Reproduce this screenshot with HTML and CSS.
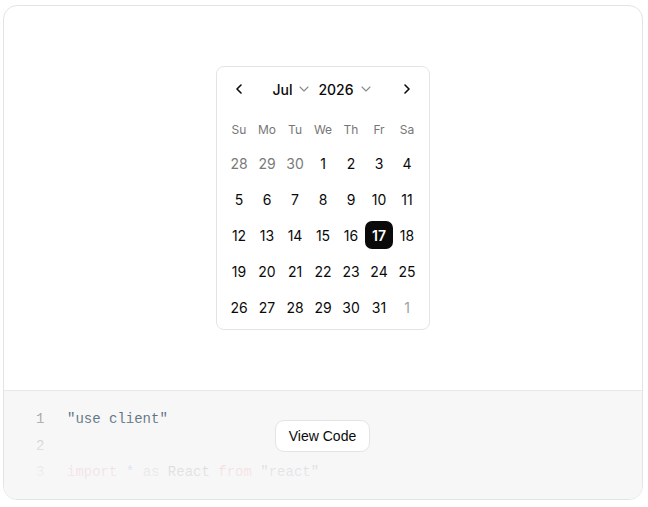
FILE: index.html
```html
<!DOCTYPE html>
<html>
<head>
<meta charset="utf-8">
<link rel="stylesheet" href="styles.css">
</head>
<body>
<div class="card">
  <div class="preview">
    <div class="calendar">
      <div class="nav">
        <button class="navbtn" aria-label="Previous month">
          <svg width="16" height="16" viewBox="0 0 24 24" fill="none" stroke="currentColor" stroke-width="2.4" stroke-linecap="round" stroke-linejoin="round"><path d="m15 18-6-6 6-6"/></svg>
        </button>
        <div class="selects">
          <span class="sel">Jul <svg class="chev" width="16" height="16" viewBox="0 0 24 24" fill="none" stroke="currentColor" stroke-width="1.6" stroke-linecap="round" stroke-linejoin="round"><path d="m6 9 6 6 6-6"/></svg></span>
          <span class="sel">2026 <svg class="chev" width="16" height="16" viewBox="0 0 24 24" fill="none" stroke="currentColor" stroke-width="1.6" stroke-linecap="round" stroke-linejoin="round"><path d="m6 9 6 6 6-6"/></svg></span>
        </div>
        <button class="navbtn" aria-label="Next month">
          <svg width="16" height="16" viewBox="0 0 24 24" fill="none" stroke="currentColor" stroke-width="2.4" stroke-linecap="round" stroke-linejoin="round"><path d="m9 18 6-6-6-6"/></svg>
        </button>
      </div>
      <div class="weekdays">
        <span>Su</span><span>Mo</span><span>Tu</span><span>We</span><span>Th</span><span>Fr</span><span>Sa</span>
      </div>
      <div class="days">
        <span class="out">28</span><span class="out">29</span><span class="out">30</span><span>1</span><span>2</span><span>3</span><span>4</span>
        <span>5</span><span>6</span><span>7</span><span>8</span><span>9</span><span>10</span><span>11</span>
        <span>12</span><span>13</span><span>14</span><span>15</span><span>16</span><span class="sel-day">17</span><span>18</span>
        <span>19</span><span>20</span><span>21</span><span>22</span><span>23</span><span>24</span><span>25</span>
        <span>26</span><span>27</span><span>28</span><span>29</span><span>30</span><span>31</span><span class="out">1</span>
      </div>
    </div>
  </div>
  <div class="code">
    <div class="line"><span class="ln">1</span><span class="src"><span class="str">"use client"</span></span></div>
    <div class="line"><span class="ln">2</span><span class="src"></span></div>
    <div class="line"><span class="ln">3</span><span class="src"><span class="kw">import</span> <span class="op">*</span> <span class="kw2">as</span> <span class="id">React</span> <span class="kw">from</span> <span class="str">"react"</span></span></div>
    <div class="fade"></div>
    <button class="viewcode">View Code</button>
  </div>
</div>
</body>
</html>
```
FILE: styles.css
```css
* { box-sizing: border-box; }
body {
  margin: 0;
  background: #ffffff;
  font-family: Inter, "Liberation Sans", sans-serif;
}
.card {
  margin: 5px 0 0 3px;
  width: 640px;
  height: 495px;
  border: 1px solid #e4e4e4;
  border-radius: 14px;
  overflow: hidden;
  display: flex;
  flex-direction: column;
}
.preview {
  height: 385px;
  display: flex;
  align-items: center;
  justify-content: center;
  border-bottom: 1px solid #e8e8e8;
}
.calendar {
  width: 214px;
  border: 1px solid #e4e4e4;
  border-radius: 8px;
  padding: 8px 8px 8px 8px;
  background: #fff;
}
.nav {
  height: 28px;
  display: flex;
  align-items: center;
  justify-content: space-between;
}
.navbtn {
  width: 28px;
  height: 28px;
  border: 0;
  background: none;
  padding: 0;
  display: flex;
  align-items: center;
  justify-content: center;
  color: #0a0a0a;
}
.selects {
  display: flex;
  gap: 6px;
  align-items: center;
}
.sel {
  display: flex;
  align-items: center;
  gap: 4px;
  font-size: 14px;
  font-weight: 500;
  color: #0a0a0a;
}
.chev { color: #8a8a8a; }
.weekdays {
  margin-top: 16px;
  height: 20px;
  display: grid;
  grid-template-columns: repeat(7, 28px);
  align-items: center;
  justify-items: center;
  font-size: 12px;
  color: #767676;
}
.days {
  margin-top: 10px;
  display: grid;
  grid-template-columns: repeat(7, 28px);
  grid-auto-rows: 28px;
  row-gap: 8px;
}
.days span {
  display: flex;
  align-items: center;
  justify-content: center;
  font-size: 14px;
  color: #0a0a0a;
  border-radius: 7px;
}
.days span.out { color: #7a7a7a; }
.days span:last-child.out { color: #a0a0a0; }
.days span.sel-day {
  background: #0a0a0a;
  color: #fff;
  font-weight: 600;
}
.code {
  position: relative;
  flex: 1;
  background: #f7f7f7;
  padding: 15px 0 0 32px;
  font-family: "Liberation Mono", "DejaVu Sans Mono", monospace;
  font-size: 14px;
}
.line {
  height: 26.5px;
  line-height: 26.5px;
  display: flex;
}
.ln {
  width: 31px;
  color: #8f8f8f;
}
.src { white-space: pre; }
.str { color: #2f4c5e; }
.kw { color: #d73a49; }
.op { color: #005cc5; }
.kw2 { color: #6a737d; }
.id { color: #24292e; }
.fade {
  position: absolute;
  left: 0;
  right: 0;
  top: 0;
  bottom: 0;
  background: linear-gradient(to bottom, rgba(247,247,247,0.15) 0%, rgba(247,247,247,0.25) 25%, rgba(247,247,247,0.75) 50%, rgba(247,247,247,0.9) 75%, rgba(247,247,247,0.92) 100%);
}
.viewcode {
  position: absolute;
  left: 271px;
  top: 29px;
  width: 95px;
  height: 32px;
  background: #fff;
  border: 1px solid #e4e4e4;
  border-radius: 9px;
  font-family: "Liberation Sans", Arial, sans-serif;
  font-size: 14px;
  color: #0a0a0a;
  padding: 0;
}
```
